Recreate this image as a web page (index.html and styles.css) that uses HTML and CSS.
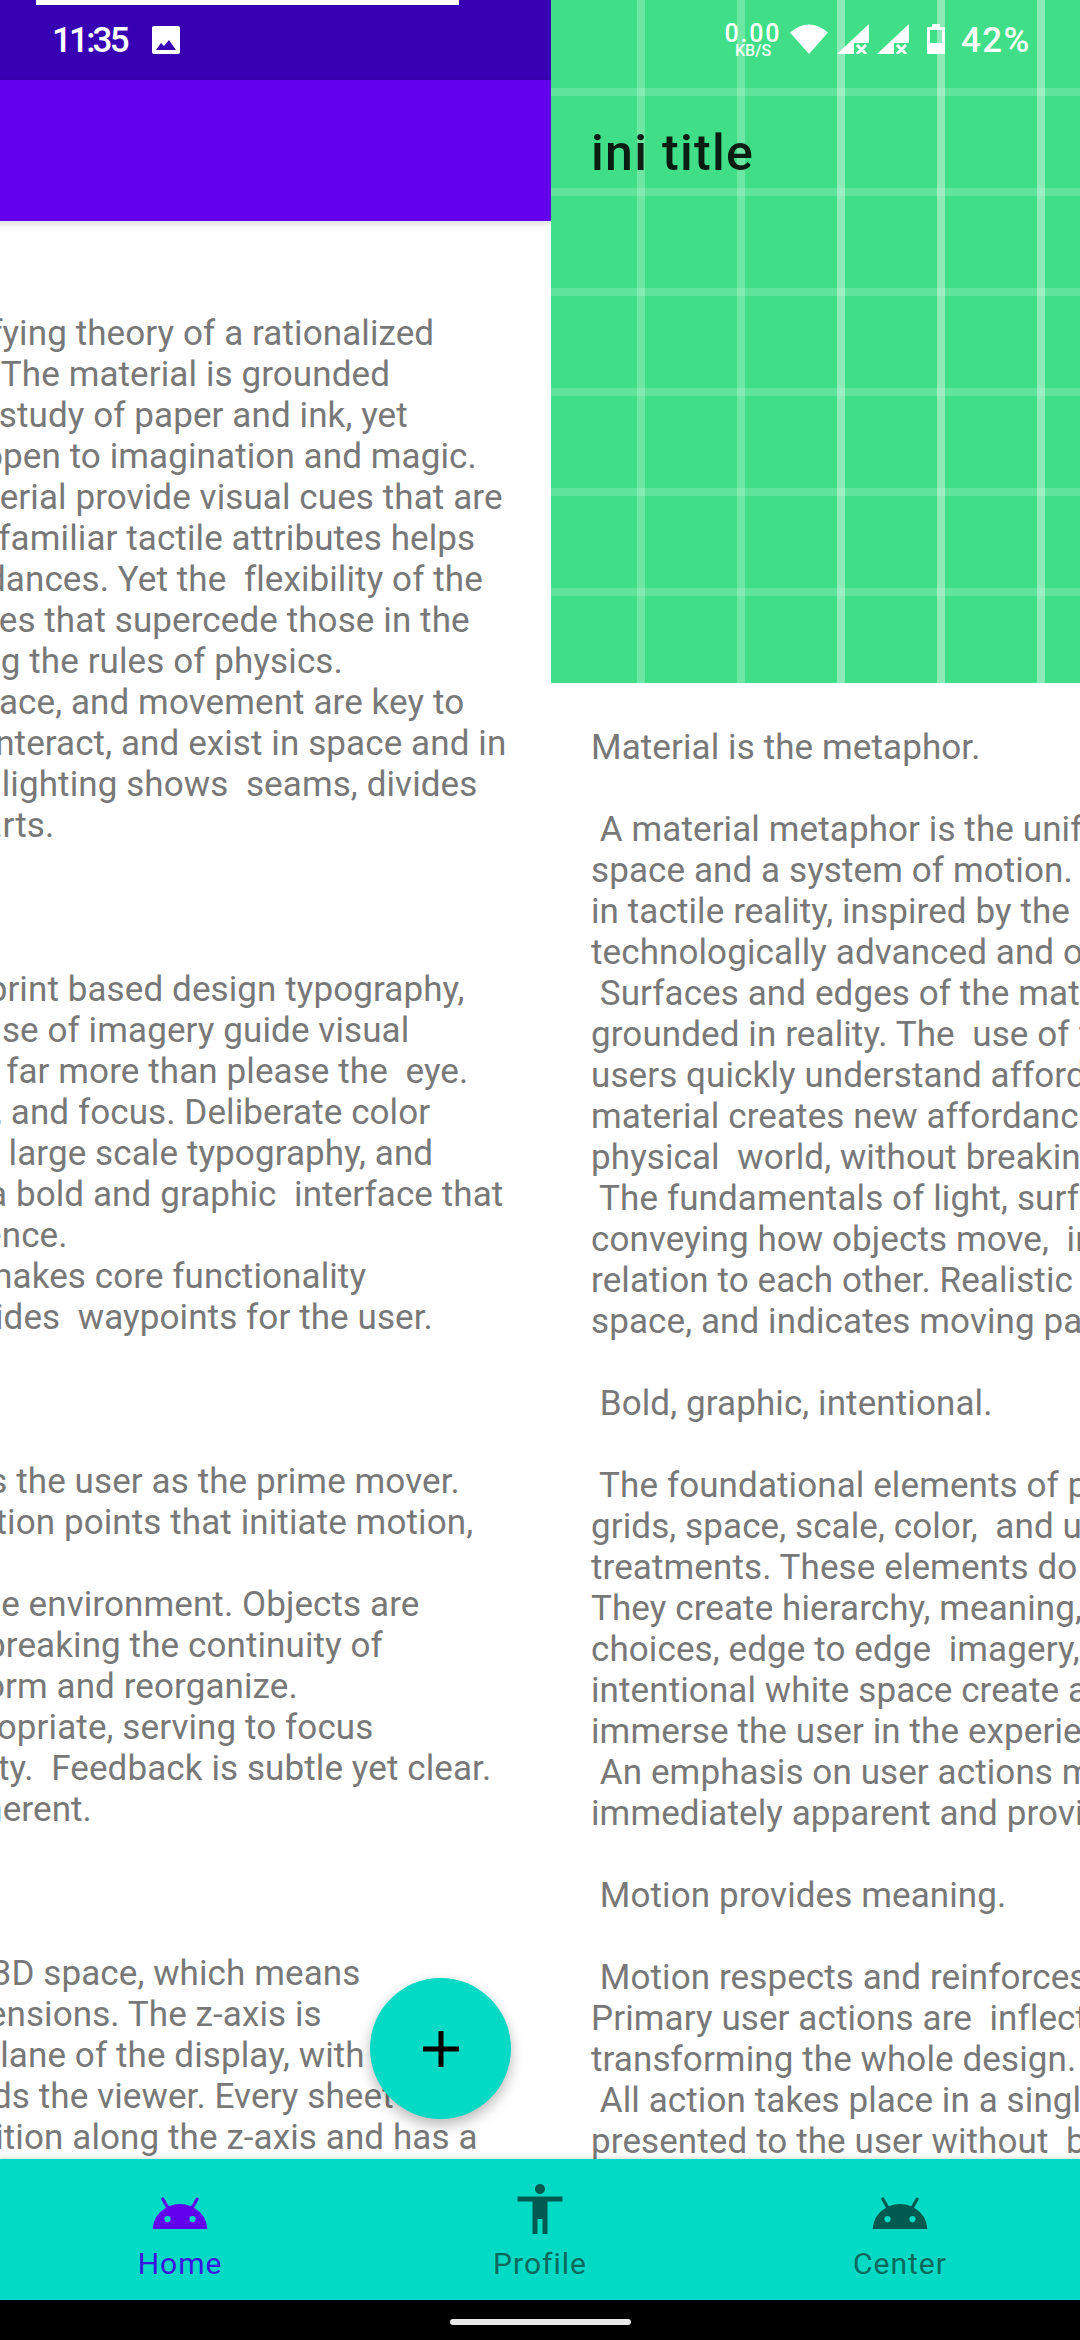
FILE: index.html

```html
<!DOCTYPE html>
<html>
	<head>
		<meta http-equiv="Content-Type" content="text/html; charset=utf-8" />
		<title>ini title</title>
		<link rel="stylesheet" href="styles.css">
	</head>
	<body>
		<div id="screen">
			<div id="pager">
				<!-- page being swiped away -->
				<div class="page">
					<div class="notice-bar"></div>
					<div class="status-left">
						<span class="clock">11:35</span>
						<svg class="pic-icon" width="30" height="30" viewBox="0 0 30 30"><path fill="#fff" fill-rule="evenodd" d="M3 1h24a2 2 0 0 1 2 2v24a2 2 0 0 1-2 2H3a2 2 0 0 1-2-2V3a2 2 0 0 1 2-2zM5 25h20l-7-10-5 6-3-3z"/></svg>
					</div>
					<div class="appbar"></div>
					<div class="content content-first"><pre class="article">Material is the metaphor.

 A material metaphor is the unifying theory of a rationalized
space and a system of motion. The material is grounded
in tactile reality, inspired by the study of paper and ink, yet
technologically advanced and open to imagination and magic.
 Surfaces and edges of the material provide visual cues that are
grounded in reality. The  use of familiar tactile attributes helps
users quickly understand affordances. Yet the  flexibility of the
material creates new affordances that supercede those in the
physical  world, without breaking the rules of physics.
 The fundamentals of light, surface, and movement are key to
conveying how objects move,  interact, and exist in space and in
relation to each other. Realistic lighting shows  seams, divides
space, and indicates moving parts.

 Bold, graphic, intentional.

 The foundational elements of print based design typography,
grids, space, scale, color,  and use of imagery guide visual
treatments. These elements do far more than please the  eye.
They create hierarchy, meaning, and focus. Deliberate color
choices, edge to edge  imagery, large scale typography, and
intentional white space create a bold and graphic  interface that
immerse the user in the experience.
 An emphasis on user actions makes core functionality
immediately apparent and provides  waypoints for the user.

 Motion provides meaning.

 Motion respects and reinforces the user as the prime mover.
Primary user actions are  inflection points that initiate motion,
transforming the whole design.
 All action takes place in a single environment. Objects are
presented to the user without  breaking the continuity of
experience even as they transform and reorganize.
 Motion is meaningful and appropriate, serving to focus
attention and maintain continuity.  Feedback is subtle yet clear.
Transitions are efficient yet coherent.

 3D world.

 The material environment is a 3D space, which means
all objects have x, y, and z  dimensions. The z-axis is
perpendicularly aligned to the plane of the display, with the
positive z-axis extending towards the viewer. Every sheet of
material occupies a  single position along the z-axis and has a
standard 1dp thickness.</pre></div>
					<div class="fab">
						<svg width="36" height="36" viewBox="0 0 36 36"><path fill="#000" d="M15.5 0h5v15.5H36v5H20.500v15.500h-5V20.500H0v-5h15.500z"/></svg>
					</div>
				</div>
				<!-- page coming in -->
				<div class="page">
					<div class="banner">
						<div class="status-right">
							<div class="speed"><span class="speed-num">0.00</span><span class="speed-unit">KB/S</span></div>
							<svg width="38" height="31" viewBox="0 0 38 31"><path fill="#fff" d="M19 31L0 9.500Q19-6.500 38 9.500z"/></svg>
							<svg class="signal" width="32" height="30" viewBox="0 0 32 30"><path fill="#fff" d="M0 30L32 0v19H17v11z"/><path fill="none" stroke="#fff" stroke-width="3" d="M20 21l9 9M29 21l-9 9"/></svg>
							<svg class="signal" width="32" height="30" viewBox="0 0 32 30"><path fill="#fff" d="M0 30L32 0v19H17v11z"/><path fill="none" stroke="#fff" stroke-width="3" d="M20 21l9 9M29 21l-9 9"/></svg>
							<svg class="battery" width="18" height="30" viewBox="0 0 18 30"><path fill="#fff" fill-rule="evenodd" d="M5 0h8v3h4a1 1 0 0 1 1 1v25a1 1 0 0 1-1 1H1a1 1 0 0 1-1-1V4a1 1 0 0 1 1-1h4zM3 6v13h12V6z"/></svg>
							<span class="percent">42%</span>
						</div>
						<div class="title">ini title</div>
					</div>
					<div class="content content-second"><pre class="article">Material is the metaphor.

 A material metaphor is the unifying theory of a rationalized
space and a system of motion. The material is grounded
in tactile reality, inspired by the study of paper and ink, yet
technologically advanced and open to imagination and magic.
 Surfaces and edges of the material provide visual cues that are
grounded in reality. The  use of familiar tactile attributes helps
users quickly understand affordances. Yet the  flexibility of the
material creates new affordances that supercede those in the
physical  world, without breaking the rules of physics.
 The fundamentals of light, surface, and movement are key to
conveying how objects move,  interact, and exist in space and in
relation to each other. Realistic lighting shows  seams, divides
space, and indicates moving parts.

 Bold, graphic, intentional.

 The foundational elements of print based design typography,
grids, space, scale, color,  and use of imagery guide visual
treatments. These elements do far more than please the  eye.
They create hierarchy, meaning, and focus. Deliberate color
choices, edge to edge  imagery, large scale typography, and
intentional white space create a bold and graphic  interface that
immerse the user in the experience.
 An emphasis on user actions makes core functionality
immediately apparent and provides  waypoints for the user.

 Motion provides meaning.

 Motion respects and reinforces the user as the prime mover.
Primary user actions are  inflection points that initiate motion,
transforming the whole design.
 All action takes place in a single environment. Objects are
presented to the user without  breaking the continuity of
experience even as they transform and reorganize.</pre></div>
				</div>
			</div>
			<div id="bottomnav">
				<div class="nav-item active">
					<svg width="60" height="60" viewBox="0 -2 24 24"><path class="android" d="M17.600 9.480l1.840-3.180c.16-.31.04-.69-.26-.85a.637.637 0 0 0-.83.22l-1.880 3.240a11.463 11.463 0 0 0-8.940 0L5.650 5.670a.643.643 0 0 0-.87-.2c-.28.18-.37.54-.22.83L6.400 9.480A10.780 10.780 0 0 0 1 18h22a10.780 10.780 0 0 0-5.400-8.520zM7 15.250a1.250 1.250 0 1 1 0-2.500 1.250 1.250 0 0 1 0 2.500zm10 0a1.250 1.250 0 1 1 0-2.500 1.250 1.250 0 0 1 0 2.500z"/></svg>
					<span>Home</span>
				</div>
				<div class="nav-item">
					<svg width="60" height="60" viewBox="0 0 24 24"><path d="M12 2c1.100 0 2 .9 2 2s-.9 2-2 2-2-.9-2-2 .9-2 2-2zm9 7h-6v13h-2v-6h-2v6H9V9H3V7h18v2z"/></svg>
					<span>Profile</span>
				</div>
				<div class="nav-item">
					<svg width="60" height="60" viewBox="0 -2 24 24"><path d="M17.600 9.480l1.840-3.180c.16-.31.04-.69-.26-.85a.637.637 0 0 0-.83.22l-1.880 3.240a11.463 11.463 0 0 0-8.940 0L5.650 5.670a.643.643 0 0 0-.87-.2c-.28.18-.37.54-.22.83L6.400 9.480A10.780 10.780 0 0 0 1 18h22a10.780 10.780 0 0 0-5.400-8.520zM7 15.250a1.250 1.250 0 1 1 0-2.500 1.250 1.250 0 0 1 0 2.500zm10 0a1.250 1.250 0 1 1 0-2.500 1.250 1.250 0 0 1 0 2.500z"/></svg>
					<span>Center</span>
				</div>
			</div>
			<div id="gesturebar"><div class="gesture-pill"></div></div>
		</div>
	</body>
</html>
```

FILE: styles.css

```css
body {margin:0;background:#000;font-family:Roboto, "Liberation Sans", sans-serif}
#screen {width:1080px;height:2340px;overflow:hidden;display:flex;flex-direction:column}

/* two pages side by side, pager is mid swipe */
#pager {display:flex;width:2160px;height:2159px;margin-left:-529px;background:#fff}
.page {flex:0 0 1080px;height:2159px;display:flex;flex-direction:column;overflow:hidden;position:relative;background:#fff}

.notice-bar {position:absolute;left:565px;top:0;width:423px;height:5px;background:#fff}
.status-left {height:80px;flex:none;background:#3700b3;display:flex;align-items:center;padding-left:581px;color:#fff}
.clock {font-size:35px;font-weight:500;letter-spacing:-2.8px;width:99px}
.pic-icon {display:block;margin-top:-1px}
.appbar {height:141px;flex:none;background:#6200ee;box-shadow:0 3px 8px rgba(0,0,0,.15);position:relative}

/* grid stripes: soft ones up to x=741, stronger after */
.banner {
	height:683px;flex:none;box-sizing:border-box;background-color:#40de87;
	background-image:
		repeating-linear-gradient(to bottom, transparent 0 88px, rgba(255,255,255,.17) 88px 96px, transparent 96px 100px),
		repeating-linear-gradient(to bottom, transparent 0 88px, rgba(255,255,255,.24) 88px 96px, transparent 96px 100px),
		repeating-linear-gradient(to right, transparent 0 86px, rgba(255,255,255,.24) 86px 94px, transparent 94px 100px),
		repeating-linear-gradient(to right, transparent 0 86px, rgba(255,255,255,.4) 86px 94px, transparent 94px 100px);
	background-size:100% 100%, 339px 100%, 200px 100%, 100% 100%;
	background-position:0 0, 100% 0, 0 0, 200px 0;
	background-repeat:no-repeat;
}
.status-right {height:80px;display:flex;align-items:flex-start;padding:0 52px 0 175px;color:#fff}
.speed {display:flex;flex-direction:column;align-items:center;width:54px;margin-top:23px}
.speed-num {font-size:25px;line-height:21px;letter-spacing:1.8px;font-weight:500}
.speed-unit {font-size:16px;line-height:14px;font-weight:500}
.status-right svg {display:block;margin-top:24px;flex:none}
.status-right svg:nth-child(2) {margin:23px 0 0 10px}
.status-right .signal {margin-left:8px}
.status-right svg:nth-child(3) {margin-left:9px}
.status-right .battery {margin-left:18px}
.percent {font-size:35px;line-height:34px;margin:24px 0 0 16px;letter-spacing:1.4px;font-weight:500}
.title {font-size:50px;line-height:59px;font-weight:500;color:rgba(0,0,0,.87);padding:44px 0 0 40px;letter-spacing:1.3px}

.content {flex:1;min-height:0;overflow:hidden}
.content-first {padding-top:10px}
.content-second {padding-top:44px}
.article {margin:0;padding-left:40px;font:35px/41px Roboto, "Liberation Sans", sans-serif;letter-spacing:.1px;color:#787878;white-space:pre}

.fab {position:absolute;left:899px;top:1978px;width:141px;height:141px;border-radius:50%;background:#03dac5;box-shadow:0 6px 14px rgba(0,0,0,.28);display:flex;align-items:center;justify-content:center}
.fab svg {display:block}

#bottomnav {height:141px;flex:none;background:#03dac5;display:flex;position:relative;box-shadow:0 -1px 3px rgba(0,0,0,.15)}
.nav-item {flex:1;display:flex;flex-direction:column;align-items:center;padding-top:20px;color:#0a6a5e;fill:#015a4f;font-size:30px;line-height:36px;letter-spacing:1px}
.nav-item svg {display:block;margin-bottom:7px}
.nav-item.active {color:#3a14e0;fill:#6200ee}

#gesturebar {height:40px;flex:none;background:#000;display:flex;justify-content:center;padding-top:19px;box-sizing:border-box}
.gesture-pill {width:181px;height:6px;border-radius:3px;background:#e8e8e8}
```
